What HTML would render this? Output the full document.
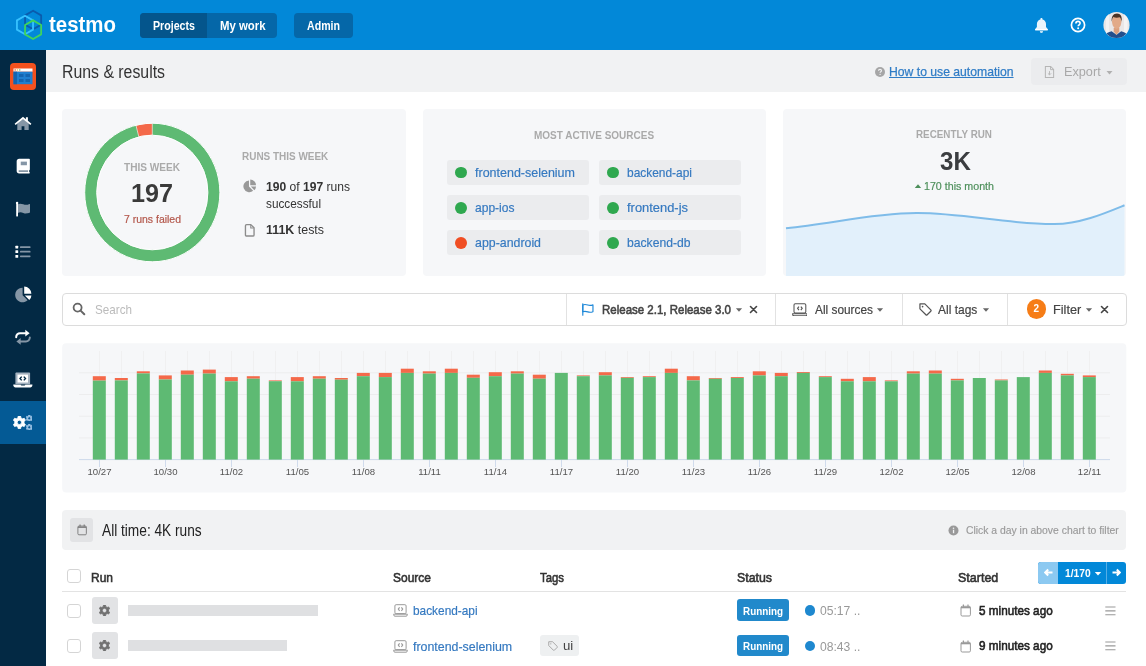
<!DOCTYPE html>
<html lang="en">
<head>
<meta charset="utf-8">
<title>Runs &amp; results - Testmo</title>
<style>
html,body{margin:0;padding:0}
body{width:1146px;height:666px;overflow:hidden;position:relative;background:#fff;font-family:"Liberation Sans",sans-serif;color:#333}
.b,.t,svg.i{position:absolute}
.b{box-sizing:border-box}
.t{white-space:pre;display:block;transform-origin:0 50%}
a.t{text-decoration:none}
h1.t{font-weight:400;margin:0}
b{font-weight:700}
header,nav,main{display:block;will-change:transform}
</style>
</head>
<body>
<header>
<div class="b" style="left:0px;top:0px;width:1146px;height:50px;background:#0288d8;"></div>
<svg class="i" style="left:10px;top:5px;" width="40" height="40" viewBox="0 0 40 40"><g fill="none" stroke-width="1.8" stroke-linejoin="round"><polygon points="23.10,5.70 31.15,10.35 31.15,19.65 23.10,24.30 15.05,19.65 15.05,10.35" stroke="#0a5cad"/><polygon points="15.00,10.70 23.05,15.35 23.05,24.65 15.00,29.30 6.95,24.65 6.95,15.35" stroke="#37c2ff"/><polygon points="23.10,15.40 31.15,20.05 31.15,29.35 23.10,34.00 15.05,29.35 15.05,20.05" stroke="#3fd45c"/></g></svg>
<span class="t" style="left:49.0px;top:11.5px;font-size:22px;line-height:26px;color:#fff;font-weight:700;transform:scaleX(0.929);">testmo</span>
<div class="b" style="left:140px;top:12.5px;width:137.3px;height:25px;background:#0567a8;border-radius:4px;overflow:hidden"><div class="b" style="left:0;top:0;width:67px;height:25px;background:#04558c"></div></div>
<span class="t" style="left:152.7px;top:18.6px;font-size:12px;line-height:14px;color:#fff;font-weight:700;transform:scaleX(0.887);">Projects</span>
<span class="t" style="left:219.6px;top:18.6px;font-size:12px;line-height:14px;color:#fff;font-weight:700;transform:scaleX(0.948);">My work</span>
<div class="b" style="left:294px;top:12.5px;width:58.5px;height:25px;background:#0567a8;border-radius:4px"></div>
<span class="t" style="left:306.6px;top:18.6px;font-size:12px;line-height:14px;color:#fff;font-weight:700;transform:scaleX(0.884);">Admin</span>
<svg class="i" style="left:1033px;top:16px;" width="17" height="18" viewBox="0 0 17 18"><path d="M8.400 2c-.6 0-1 .4-1 1v.4C5.200 3.900 3.900 5.800 3.900 8v3l-1.700 2.100v1.100h12.500v-1.100L13 11V8c0-2.200-1.300-4.100-3.500-4.600V3c0-.6-.5-1-1.100-1z" fill="#e9f4fc"/><path d="M2.200 13h12.500v1.300H2.200z" fill="#fff"/><path d="M6.900 15.200c0 .9.700 1.600 1.500 1.600s1.600-.7 1.600-1.600z" fill="#fff"/></svg>
<svg class="i" style="left:1068.6px;top:16px;" width="18" height="18" viewBox="0 0 18 18"><circle cx="9" cy="9" r="6.600" fill="none" stroke="#fff" stroke-width="1.700"/><path d="M6.900 7.400c0-1.200.9-2 2.100-2s2.100.8 2.100 1.900c0 1.500-1.900 1.600-1.900 3" fill="none" stroke="#fff" stroke-width="1.600"/><circle cx="9.150" cy="12.300" r="1" fill="#fff"/></svg>
<svg class="i" style="left:1103px;top:11px;" width="28" height="28" viewBox="0 0 28 28"><defs><clipPath id="av"><circle cx="13.500" cy="14" r="13.100"/></clipPath></defs><g clip-path="url(#av)"><rect width="28" height="28" fill="#e9e7e7"/><rect x="3" y="0" width="3" height="28" fill="#f3f2f2"/><rect x="21" y="0" width="3.500" height="28" fill="#f4f3f3"/><path d="M1 28c.3-4.500 3-6.600 7.600-7.700l4.900 3.500 4.700-3.500c4.300 1.100 7 3.200 7.300 7.700z" fill="#234f8c"/><path d="M10.700 17h5.600v3.600l-2.800 3.400-2.800-3.400z" fill="#dba07e"/><path d="M9 10.500c0-3.800 1.900-5.700 4.700-5.700s4.700 1.900 4.700 5.700c0 1.700-.5 3.600-1.400 5.100-.8 1.300-2 2.300-3.300 2.300s-2.500-1-3.300-2.300c-.9-1.500-1.400-3.400-1.400-5.100z" fill="#e2aa88"/><path d="M8.800 10.800c-.8-4.800 1.500-8.200 5.200-8.200 3.500 0 5.400 2.900 4.600 8.200-.4-2.500-1.200-3.900-2-4.500-2 .7-4.600.6-6.200-.3-.8.900-1.400 2.500-1.600 4.800z" fill="#4a3426"/></g></svg>
</header>
<nav>
<div class="b" style="left:0px;top:50px;width:46px;height:616px;background:#032944;"></div>
<div class="b" style="left:0px;top:401px;width:46px;height:43px;background:#045a95;"></div>
<div class="b" style="left:10px;top:62.5px;width:26px;height:27px;background:#f4511e;border-radius:4px"></div>
<svg class="i" style="left:13px;top:68px;" width="20" height="17" viewBox="0 0 20 17"><rect x=".5" y=".5" width="19" height="3.200" fill="#fff"/><rect x=".5" y="3.700" width="19" height="12.500" fill="#1f7fd0"/><rect x=".5" y="3.700" width="3.500" height="12.500" fill="#1565b0"/><rect x="6" y="6" width="4.500" height="3" fill="#1565b0"/><rect x="12.500" y="6" width="4.500" height="3" fill="#1565b0"/><rect x="6" y="11" width="4.500" height="3" fill="#1565b0"/><rect x="12.500" y="11" width="4.500" height="3" fill="#1565b0"/><rect x="1.500" y="1.300" width="1.300" height="1.300" fill="#f4511e"/><rect x="3.800" y="1.300" width="1.300" height="1.300" fill="#f5c242"/><rect x="6.100" y="1.300" width="1.300" height="1.300" fill="#6cc070"/></svg>
<svg class="i" style="left:14px;top:116px;" width="18" height="15" viewBox="0 0 18 15"><path d="M3.300 7.600V14h4.300v-3.800h2.800V14h4.300V7.600L9 2.900z" fill="#8596a6"/><path d="M.6 7.700L9 .8l2.900 2.400V1.300h2v3.500l3.500 2.900-1 1.200L9 3.200 1.600 8.900z" fill="#fff"/></svg>
<svg class="i" style="left:15.6px;top:158.2px;" width="15.2" height="15.8" viewBox="0 0 16 16"><path d="M3.300.5h10.500c.5 0 .8.300.8.800v10.500c0 .4-.3.700-.7.800v1.700c.4.100.7.400.7.800s-.3.800-.8.800H3.300C1.800 15.900.7 14.800.7 13.300V3.100C.7 1.600 1.800.5 3.300.5z" fill="#fff"/><rect x="5" y="3.500" width="6.500" height="3.800" fill="#8596a6"/><path d="M3.400 12.700h9.300v1.600H3.400c-.5 0-.8-.3-.8-.8s.3-.8.800-.8z" fill="#8596a6"/></svg>
<svg class="i" style="left:15px;top:201px;" width="17" height="17" viewBox="0 0 17 17"><path d="M2.600 3.200c2.200-.9 3.800-.6 5.700.1 1.900.7 3.500.8 6.700-.300v8.600c-3.200 1.200-4.800 1-6.700.3-1.900-.7-3.500-.9-5.700 0z" fill="#8596a6"/><rect x="1.200" y="1.200" width="1.800" height="14.400" rx=".9" fill="#fff"/><circle cx="2.100" cy="1.900" r="1.200" fill="#fff"/></svg>
<svg class="i" style="left:15px;top:245px;" width="17" height="14" viewBox="0 0 17 14"><g fill="#fff"><rect x=".4" y=".7" width="2.800" height="2.800" rx=".5"/><rect x=".4" y="5.300" width="2.800" height="2.800" rx=".5"/><rect x=".4" y="9.900" width="2.800" height="2.800" rx=".5"/></g><g fill="#8596a6"><rect x="5" y="1.200" width="10.500" height="1.800" rx=".6"/><rect x="5" y="5.800" width="10.500" height="1.800" rx=".6"/><rect x="5" y="10.400" width="10.500" height="1.800" rx=".6"/></g></svg>
<svg class="i" style="left:15px;top:286px;" width="17" height="17" viewBox="0 0 17 17"><path d="M7.600 1.700v7.500l5 5A7.300 7.300 0 1 1 7.600 1.700z" fill="#8596a6"/><path d="M9.200.6a7.200 7.200 0 0 1 7.200 7.200H9.200zM9.800 9.400h6.600a7.300 7.300 0 0 1-2.100 4.700z" fill="#fff"/></svg>
<svg class="i" style="left:14px;top:329px;" width="18" height="17" viewBox="0 0 18 17"><g fill="none" stroke-width="2" stroke-linecap="round"><path d="M2.200 8.200V8c0-2.100 1.700-3.800 3.800-3.800h6" stroke="#fff"/><path d="M15.800 8.400v.2c0 2.100-1.700 3.800-3.800 3.800H6" stroke="#8596a6"/></g><path d="M11.300 .8l4.300 3.400-4.300 3.400z" fill="#fff"/><path d="M6.700 9l-4.300 3.400 4.300 3.400z" fill="#8596a6"/></svg>
<svg class="i" style="left:13px;top:371px;" width="20" height="17" viewBox="0 0 20 17"><path d="M2.400 2.600c0-.6.500-1.100 1.100-1.100h12.500c.6 0 1.100.5 1.100 1.100v10.500H2.400z" fill="#a3b1bf"/><rect x="4.500" y="3.600" width="10.500" height="7.900" fill="#fff"/><path d="M8.700 5.600L7 7.500l1.700 1.900M10.800 5.600l1.700 1.900-1.700 1.900" fill="none" stroke="#032944" stroke-width="1.400"/><path d="M.3 13.400h19.100v.9c0 1.200-1 2.200-2.200 2.200H2.500c-1.200 0-2.200-1-2.200-2.200z" fill="#fff"/><path d="M7.700 13.400h4.600c0 .7-.5 1.100-1.100 1.100H8.800c-.6 0-1.100-.4-1.100-1.100z" fill="#032944"/></svg>
</nav>
<nav>
<svg class="i" style="left:13.1px;top:416.1px;" width="12.8" height="12.8" viewBox="0 0 12.8 12.8"><path fill-rule="evenodd" d="M4.89 1.91L5.20 0.11L7.60 0.11L7.91 1.91L9.53 2.85L11.24 2.22L12.44 4.30L11.04 5.46L11.04 7.34L12.44 8.50L11.24 10.58L9.53 9.95L7.91 10.89L7.60 12.69L5.20 12.69L4.89 10.89L3.27 9.95L1.56 10.58L0.36 8.50L1.76 7.34L1.76 5.46L0.36 4.30L1.56 2.22L3.27 2.85Z M8.58 6.4A2.18 2.18 0 1 0 4.22 6.4A2.18 2.18 0 1 0 8.58 6.4Z" fill="#fff" stroke="#fff" stroke-width=".8" stroke-linejoin="round"/></svg>
<svg class="i" style="left:25.7px;top:414.9px;" width="6.6" height="6.6" viewBox="0 0 6.6 6.6"><path fill-rule="evenodd" d="M2.52 0.99L2.68 0.06L3.92 0.06L4.08 0.99L4.91 1.47L5.80 1.14L6.42 2.21L5.69 2.82L5.69 3.78L6.42 4.39L5.80 5.46L4.91 5.13L4.08 5.61L3.92 6.54L2.68 6.54L2.52 5.61L1.69 5.13L0.80 5.46L0.18 4.39L0.91 3.78L0.91 2.82L0.18 2.21L0.80 1.14L1.69 1.47Z M4.82 3.3A1.52 1.52 0 1 0 1.78 3.3A1.52 1.52 0 1 0 4.82 3.3Z" fill="#9cc3e4" stroke="#9cc3e4" stroke-width=".8" stroke-linejoin="round"/></svg>
<svg class="i" style="left:25.7px;top:423.7px;" width="6.6" height="6.6" viewBox="0 0 6.6 6.6"><path fill-rule="evenodd" d="M2.52 0.99L2.68 0.06L3.92 0.06L4.08 0.99L4.91 1.47L5.80 1.14L6.42 2.21L5.69 2.82L5.69 3.78L6.42 4.39L5.80 5.46L4.91 5.13L4.08 5.61L3.92 6.54L2.68 6.54L2.52 5.61L1.69 5.13L0.80 5.46L0.18 4.39L0.91 3.78L0.91 2.82L0.18 2.21L0.80 1.14L1.69 1.47Z M4.82 3.3A1.52 1.52 0 1 0 1.78 3.3A1.52 1.52 0 1 0 4.82 3.3Z" fill="#9cc3e4" stroke="#9cc3e4" stroke-width=".8" stroke-linejoin="round"/></svg>
</nav>
<main>
<div class="b" style="left:46px;top:50px;width:1100px;height:42px;background:#f1f2f3;"></div>
<h1 class="t" style="left:62.0px;top:60.8px;font-size:18px;line-height:22px;color:#333;transform:scaleX(0.880);margin:0;">Runs &amp; results</h1>
<svg class="i" style="left:874px;top:66px;" width="12" height="12" viewBox="0 0 12 12"><circle cx="6" cy="6" r="5" fill="#a6a6a6"/><path d="M4.500 4.800c0-.9.700-1.400 1.500-1.400s1.500.5 1.500 1.300c0 1-1.400 1.100-1.400 2.100" fill="none" stroke="#f1f2f3" stroke-width="1.100"/><circle cx="6.100" cy="8.400" r=".65" fill="#f1f2f3"/></svg>
<a class="t" style="left:889.0px;top:64.0px;font-size:13.5px;line-height:16px;color:#2f7cc6;transform:scaleX(0.902);text-decoration:underline;-webkit-text-stroke:0.25px #2f7cc6;">How to use automation</a>
<div class="b" style="left:1030.5px;top:58px;width:96px;height:26.5px;background:#ebecee;border-radius:4px"></div>
<svg class="i" style="left:1043.5px;top:64.5px;" width="11" height="14" viewBox="0 0 12 15"><path d="M1.500 1.500h5.800l3.200 3.200v8.800h-9z" fill="none" stroke="#b5b5b5" stroke-width="1.100"/><path d="M7.100 1.700v3.200h3.200" fill="none" stroke="#b5b5b5" stroke-width="1"/><path d="M6 6.500v4M4.300 9l1.700 1.700L7.700 9" fill="none" stroke="#b5b5b5" stroke-width="1"/></svg>
<span class="t" style="left:1063.7px;top:64.0px;font-size:13.5px;line-height:16px;color:#a8a8a8;transform:scaleX(0.940);">Export</span>
<svg class="i" style="left:1105px;top:70px;" width="9" height="6" viewBox="0 0 9 6"><path d="M1.500 1h6L4.500 4.500z" fill="#b0b0b0"/></svg>
<div class="b" style="left:62px;top:109px;width:343.5px;height:167px;background:#f6f7f9;border-radius:4px"></div>
<div class="b" style="left:423px;top:109px;width:343px;height:167px;background:#f6f7f9;border-radius:4px"></div>
<div class="b" style="left:782.5px;top:109px;width:343.8px;height:167px;background:#f6f7f9;border-radius:4px;overflow:hidden"><svg width="344" height="167" viewBox="782.5 109 344 167" style="position:absolute;left:0;top:0"><path d="M785.500 228.200C830 224 870 213.500 916 213.100C960 212.800 1010 224.500 1054 224.100C1080 223.800 1105 213 1124 205.200V276H785.500z" fill="#e2f0fb"/><path d="M785.500 228.200C830 224 870 213.500 916 213.100C960 212.800 1010 224.500 1054 224.100C1080 223.800 1105 213 1124 205.200" fill="none" stroke="#7fbce9" stroke-width="2"/></svg></div>
<svg class="i" style="left:0px;top:0px;pointer-events:none;" width="1146" height="666" viewBox="0 0 1146 666"><ellipse cx="152.3" cy="192.5" rx="61.599999999999994" ry="63.3" fill="none" stroke="#5eba73" stroke-width="12"/><path d="M135.95 125.26A67.6 69.3 0 0 1 152.30 123.20L152.30 135.20A55.599999999999994 57.3 0 0 0 138.85 136.90Z" fill="#f4694a" stroke="#fff" stroke-width=".6"/><ellipse cx="152.3" cy="192.5" rx="67.6" ry="69.3" fill="none" stroke="#fff" stroke-width="1"/><ellipse cx="152.3" cy="192.5" rx="55.599999999999994" ry="57.3" fill="none" stroke="#fff" stroke-width="1"/></svg>
<span class="t" style="left:124.3px;top:160.8px;font-size:11px;line-height:13px;color:#aaa;font-weight:700;transform:scaleX(0.916);">THIS WEEK</span>
<span class="t" style="left:131.3px;top:178.4px;font-size:25px;line-height:30px;color:#3a3a3a;font-weight:700;transform:scaleX(1.007);">197</span>
<span class="t" style="left:123.8px;top:212.7px;font-size:11px;line-height:13px;color:#b3574b;transform:scaleX(0.951);-webkit-text-stroke:0.2px #b3574b;">7 runs failed</span>
<span class="t" style="left:242.3px;top:149.5px;font-size:11px;line-height:13px;color:#aaa;font-weight:700;transform:scaleX(0.905);">RUNS THIS WEEK</span>
<svg class="i" style="left:243.4px;top:179.35px;" width="13.6" height="13.6" viewBox="0 0 15 15"><path d="M6.600 1.600v6.800l4.600 4.600A6.500 6.500 0 1 1 6.600 1.600z" fill="#999"/><path d="M8 .6a6.400 6.400 0 0 1 6.400 6.400H8zM8.600 8.300h5.800a6.500 6.500 0 0 1-1.900 4.100z" fill="#999"/></svg>
<span class="t" style="left:266.0px;top:178.6px;font-size:13.5px;line-height:16px;color:#333;transform:scaleX(0.895);"><b>190</b> of <b>197</b> runs</span>
<span class="t" style="left:266.0px;top:196.2px;font-size:13.5px;line-height:16px;color:#333;transform:scaleX(0.873);">successful</span>
<svg class="i" style="left:244.3px;top:222.6px;" width="11.6" height="14.5" viewBox="0 0 12 15"><path d="M2.700 1.700h4.400l3.300 3.300v7.300c0 .7-.5 1.200-1.200 1.200H2.700c-.7 0-1.200-.5-1.200-1.200V2.900c0-.7.500-1.200 1.200-1.200z" fill="none" stroke="#8c8c8c" stroke-width="1.400" stroke-linejoin="round"/><path d="M7 2v3.100h3.100" fill="none" stroke="#8c8c8c" stroke-width="1.100"/></svg>
<span class="t" style="left:266.0px;top:222.0px;font-size:13.5px;line-height:16px;color:#333;transform:scaleX(0.920);"><b>111K</b> tests</span>
<span class="t" style="left:534.4px;top:128.9px;font-size:11px;line-height:13px;color:#aaa;font-weight:700;transform:scaleX(0.908);">MOST ACTIVE SOURCES</span>
<div class="b" style="left:447px;top:159.7px;width:142px;height:25px;background:#ebecee;border-radius:3px"></div>
<div class="b" style="left:455.2px;top:166.5px;width:11.800px;height:11.800px;border-radius:50%;background:#2fa84f"></div>
<a class="t" style="left:474.7px;top:164.7px;font-size:13.5px;line-height:16px;color:#3579c0;transform:scaleX(0.925);-webkit-text-stroke:0.2px #3579c0;">frontend-selenium</a>
<div class="b" style="left:599px;top:159.7px;width:142px;height:25px;background:#ebecee;border-radius:3px"></div>
<div class="b" style="left:607.2px;top:166.5px;width:11.800px;height:11.800px;border-radius:50%;background:#2fa84f"></div>
<a class="t" style="left:626.7px;top:164.7px;font-size:13.5px;line-height:16px;color:#3579c0;transform:scaleX(0.884);-webkit-text-stroke:0.2px #3579c0;">backend-api</a>
<div class="b" style="left:447px;top:195.0px;width:142px;height:25px;background:#ebecee;border-radius:3px"></div>
<div class="b" style="left:455.2px;top:201.8px;width:11.800px;height:11.800px;border-radius:50%;background:#2fa84f"></div>
<a class="t" style="left:474.7px;top:200.0px;font-size:13.5px;line-height:16px;color:#3579c0;transform:scaleX(0.892);-webkit-text-stroke:0.2px #3579c0;">app-ios</a>
<div class="b" style="left:599px;top:195.0px;width:142px;height:25px;background:#ebecee;border-radius:3px"></div>
<div class="b" style="left:607.2px;top:201.8px;width:11.800px;height:11.800px;border-radius:50%;background:#2fa84f"></div>
<a class="t" style="left:626.7px;top:200.0px;font-size:13.5px;line-height:16px;color:#3579c0;transform:scaleX(0.956);-webkit-text-stroke:0.2px #3579c0;">frontend-js</a>
<div class="b" style="left:447px;top:230.3px;width:142px;height:25px;background:#ebecee;border-radius:3px"></div>
<div class="b" style="left:455.2px;top:237.1px;width:11.800px;height:11.800px;border-radius:50%;background:#f04e23"></div>
<a class="t" style="left:474.7px;top:235.3px;font-size:13.5px;line-height:16px;color:#3579c0;transform:scaleX(0.916);-webkit-text-stroke:0.2px #3579c0;">app-android</a>
<div class="b" style="left:599px;top:230.3px;width:142px;height:25px;background:#ebecee;border-radius:3px"></div>
<div class="b" style="left:607.2px;top:237.1px;width:11.800px;height:11.800px;border-radius:50%;background:#2fa84f"></div>
<a class="t" style="left:626.7px;top:235.3px;font-size:13.5px;line-height:16px;color:#3579c0;transform:scaleX(0.900);-webkit-text-stroke:0.2px #3579c0;">backend-db</a>
<span class="t" style="left:916.4px;top:128.3px;font-size:11px;line-height:13px;color:#aaa;font-weight:700;transform:scaleX(0.894);">RECENTLY RUN</span>
<span class="t" style="left:939.6px;top:145.6px;font-size:25px;line-height:30px;color:#3b3d40;font-weight:700;transform:scaleX(0.963);">3K</span>
<svg class="i" style="left:914px;top:183px;" width="8" height="6" viewBox="0 0 8 6"><path d="M.8 5L4 1.300 7.200 5z" fill="#4d8f5b"/></svg>
<span class="t" style="left:924.0px;top:180.3px;font-size:11px;line-height:13px;color:#4d8f5b;transform:scaleX(0.970);-webkit-text-stroke:0.2px #4d8f5b;">170 this month</span>
<div class="b" style="left:62px;top:293px;width:1064.6px;height:33px;background:#fff;border:1px solid #dcdcdc;border-radius:4px"></div>
<div class="b" style="left:566.0px;top:294px;width:1px;height:31px;background:#e2e2e2;"></div>
<div class="b" style="left:775.0px;top:294px;width:1px;height:31px;background:#e2e2e2;"></div>
<div class="b" style="left:902.0px;top:294px;width:1px;height:31px;background:#e2e2e2;"></div>
<div class="b" style="left:1007.0px;top:294px;width:1px;height:31px;background:#e2e2e2;"></div>
<svg class="i" style="left:72px;top:302px;" width="14" height="14" viewBox="0 0 14 14"><circle cx="5.600" cy="5.600" r="4" fill="none" stroke="#666" stroke-width="1.800"/><path d="M8.600 8.600l3.700 3.700" stroke="#666" stroke-width="2" stroke-linecap="round"/></svg>
<span class="t" style="left:94.6px;top:301.5px;font-size:13.5px;line-height:16px;color:#bbb;transform:scaleX(0.865);">Search</span>
<svg class="i" style="left:581.1px;top:301.9px;" width="14.4" height="14.4" viewBox="0 0 16 16"><path d="M2 2v12.700" stroke="#1e88d8" stroke-width="1.300" stroke-linecap="round"/><path d="M2 3.300c2.300-1 3.800-.5 5.600.1 1.800.6 3.200.7 5.700-.2v7.600c-2.500.9-3.900.8-5.700.2-1.800-.6-3.300-1.100-5.600-.1z" fill="none" stroke="#1e88d8" stroke-width="1.300" stroke-linejoin="round"/></svg>
<span class="t" style="left:602.0px;top:301.5px;font-size:13.5px;line-height:16px;color:#444;transform:scaleX(0.851);-webkit-text-stroke:0.6px #444;">Release 2.1, Release 3.0</span>
<svg class="i" style="left:734.5px;top:307.2px;" width="8" height="6" viewBox="0 0 8 6"><path d="M.9 1.200h6.200L4 4.700z" fill="#666"/></svg>
<svg class="i" style="left:749px;top:305px;" width="9" height="9" viewBox="0 0 9 9"><path d="M1.500 1.500l6 6M7.500 1.500l-6 6" stroke="#444" stroke-width="1.600" stroke-linecap="round"/></svg>
<svg class="i" style="left:791.7px;top:302.5px;" width="15.8" height="13.7" viewBox="0 0 15 13"><rect x="1.900" y=".7" width="11.200" height="8.900" rx="1.200" fill="none" stroke="#555" stroke-width="1"/><path d="M6.600 3.400L5.300 5.100l1.300 1.700M8.400 3.400l1.300 1.700-1.300 1.700" fill="none" stroke="#555" stroke-width="1.100"/><path d="M.6 10.200h13.800v.6c0 .8-.6 1.400-1.400 1.400H2c-.8 0-1.400-.6-1.400-1.400z" fill="none" stroke="#555" stroke-width="1"/></svg>
<span class="t" style="left:815.0px;top:301.7px;font-size:13.5px;line-height:16px;color:#444;transform:scaleX(0.878);-webkit-text-stroke:0.2px #444;">All sources</span>
<svg class="i" style="left:876.4px;top:307.2px;" width="8" height="6" viewBox="0 0 8 6"><path d="M.9 1.200h6.200L4 4.700z" fill="#666"/></svg>
<svg class="i" style="left:918.6px;top:303px;" width="13.2" height="13.2" viewBox="0 0 14 14"><path d="M1 1h5.200l6.300 6.300c.4.400.4 1 0 1.400l-3.800 3.800c-.4.400-1 .4-1.400 0L1 6.200z" fill="none" stroke="#555" stroke-width="1.300" stroke-linejoin="round"/><circle cx="3.800" cy="3.800" r=".9" fill="#555"/></svg>
<span class="t" style="left:938.4px;top:301.7px;font-size:13.5px;line-height:16px;color:#444;transform:scaleX(0.888);-webkit-text-stroke:0.2px #444;">All tags</span>
<svg class="i" style="left:982.2px;top:307.2px;" width="8" height="6" viewBox="0 0 8 6"><path d="M.9 1.200h6.200L4 4.700z" fill="#666"/></svg>
<div class="b" style="left:1026.500px;top:299.100px;width:19.600px;height:19.600px;border-radius:50%;background:#f67d17"></div>
<span class="t" style="left:1033.5px;top:303.2px;font-size:10px;line-height:12px;color:#fff;font-weight:700;">2</span>
<span class="t" style="left:1052.8px;top:302.0px;font-size:13.5px;line-height:16px;color:#444;transform:scaleX(0.940);-webkit-text-stroke:0.2px #444;">Filter</span>
<svg class="i" style="left:1085.3px;top:307.2px;" width="8" height="6" viewBox="0 0 8 6"><path d="M.9 1.200h6.200L4 4.700z" fill="#666"/></svg>
<svg class="i" style="left:1099.5px;top:305px;" width="9" height="9" viewBox="0 0 9 9"><path d="M1.500 1.500l6 6M7.500 1.500l-6 6" stroke="#444" stroke-width="1.600" stroke-linecap="round"/></svg>
<svg class="i" style="left:0px;top:0px;pointer-events:none;font-family:&quot;Liberation Sans&quot;,sans-serif;" width="1146" height="666" viewBox="0 0 1146 666"><rect x="62.200" y="343.200" width="1064.100" height="149.400" rx="4" fill="#f6f7f9"/><path d="M99.5 351V459.6" stroke="#f0f0f1" stroke-width="1"/><path d="M121.5 351V459.6" stroke="#f0f0f1" stroke-width="1"/><path d="M143.5 351V459.6" stroke="#f0f0f1" stroke-width="1"/><path d="M165.5 351V459.6" stroke="#f0f0f1" stroke-width="1"/><path d="M187.5 351V459.6" stroke="#f0f0f1" stroke-width="1"/><path d="M209.5 351V459.6" stroke="#f0f0f1" stroke-width="1"/><path d="M231.5 351V459.6" stroke="#f0f0f1" stroke-width="1"/><path d="M253.5 351V459.6" stroke="#f0f0f1" stroke-width="1"/><path d="M275.5 351V459.6" stroke="#f0f0f1" stroke-width="1"/><path d="M297.5 351V459.6" stroke="#f0f0f1" stroke-width="1"/><path d="M319.5 351V459.6" stroke="#f0f0f1" stroke-width="1"/><path d="M341.5 351V459.6" stroke="#f0f0f1" stroke-width="1"/><path d="M363.5 351V459.6" stroke="#f0f0f1" stroke-width="1"/><path d="M385.5 351V459.6" stroke="#f0f0f1" stroke-width="1"/><path d="M407.5 351V459.6" stroke="#f0f0f1" stroke-width="1"/><path d="M429.5 351V459.6" stroke="#f0f0f1" stroke-width="1"/><path d="M451.5 351V459.6" stroke="#f0f0f1" stroke-width="1"/><path d="M473.5 351V459.6" stroke="#f0f0f1" stroke-width="1"/><path d="M495.5 351V459.6" stroke="#f0f0f1" stroke-width="1"/><path d="M517.5 351V459.6" stroke="#f0f0f1" stroke-width="1"/><path d="M539.5 351V459.6" stroke="#f0f0f1" stroke-width="1"/><path d="M561.5 351V459.6" stroke="#f0f0f1" stroke-width="1"/><path d="M583.5 351V459.6" stroke="#f0f0f1" stroke-width="1"/><path d="M605.5 351V459.6" stroke="#f0f0f1" stroke-width="1"/><path d="M627.5 351V459.6" stroke="#f0f0f1" stroke-width="1"/><path d="M649.5 351V459.6" stroke="#f0f0f1" stroke-width="1"/><path d="M671.5 351V459.6" stroke="#f0f0f1" stroke-width="1"/><path d="M693.5 351V459.6" stroke="#f0f0f1" stroke-width="1"/><path d="M715.5 351V459.6" stroke="#f0f0f1" stroke-width="1"/><path d="M737.5 351V459.6" stroke="#f0f0f1" stroke-width="1"/><path d="M759.5 351V459.6" stroke="#f0f0f1" stroke-width="1"/><path d="M781.5 351V459.6" stroke="#f0f0f1" stroke-width="1"/><path d="M803.5 351V459.6" stroke="#f0f0f1" stroke-width="1"/><path d="M825.5 351V459.6" stroke="#f0f0f1" stroke-width="1"/><path d="M847.5 351V459.6" stroke="#f0f0f1" stroke-width="1"/><path d="M869.5 351V459.6" stroke="#f0f0f1" stroke-width="1"/><path d="M891.5 351V459.6" stroke="#f0f0f1" stroke-width="1"/><path d="M913.5 351V459.6" stroke="#f0f0f1" stroke-width="1"/><path d="M935.5 351V459.6" stroke="#f0f0f1" stroke-width="1"/><path d="M957.5 351V459.6" stroke="#f0f0f1" stroke-width="1"/><path d="M979.5 351V459.6" stroke="#f0f0f1" stroke-width="1"/><path d="M1001.5 351V459.6" stroke="#f0f0f1" stroke-width="1"/><path d="M1023.5 351V459.6" stroke="#f0f0f1" stroke-width="1"/><path d="M1045.5 351V459.6" stroke="#f0f0f1" stroke-width="1"/><path d="M1067.5 351V459.6" stroke="#f0f0f1" stroke-width="1"/><path d="M1089.5 351V459.6" stroke="#f0f0f1" stroke-width="1"/><path d="M79 372.8H1110" stroke="#ededee" stroke-width="1"/><path d="M79 394.5H1110" stroke="#ededee" stroke-width="1"/><path d="M79 416.2H1110" stroke="#ededee" stroke-width="1"/><path d="M79 437.9H1110" stroke="#ededee" stroke-width="1"/><path d="M79 459.6H1110" stroke="#cdd9eb" stroke-width="1"/><path d="M99.5 459.6V467" stroke="#d0dbec" stroke-width="1"/><path d="M165.5 459.6V467" stroke="#d0dbec" stroke-width="1"/><path d="M231.5 459.6V467" stroke="#d0dbec" stroke-width="1"/><path d="M297.5 459.6V467" stroke="#d0dbec" stroke-width="1"/><path d="M363.5 459.6V467" stroke="#d0dbec" stroke-width="1"/><path d="M429.5 459.6V467" stroke="#d0dbec" stroke-width="1"/><path d="M495.5 459.6V467" stroke="#d0dbec" stroke-width="1"/><path d="M561.5 459.6V467" stroke="#d0dbec" stroke-width="1"/><path d="M627.5 459.6V467" stroke="#d0dbec" stroke-width="1"/><path d="M693.5 459.6V467" stroke="#d0dbec" stroke-width="1"/><path d="M759.5 459.6V467" stroke="#d0dbec" stroke-width="1"/><path d="M825.5 459.6V467" stroke="#d0dbec" stroke-width="1"/><path d="M891.5 459.6V467" stroke="#d0dbec" stroke-width="1"/><path d="M957.5 459.6V467" stroke="#d0dbec" stroke-width="1"/><path d="M1023.5 459.6V467" stroke="#d0dbec" stroke-width="1"/><path d="M1089.5 459.6V467" stroke="#d0dbec" stroke-width="1"/><rect x="92.8" y="376.2" width="13" height="4.4" fill="#f4694a"/><rect x="92.8" y="380.6" width="13" height="79.0" fill="#5eba73"/><rect x="114.8" y="378.0" width="13" height="2.4" fill="#f4694a"/><rect x="114.8" y="380.4" width="13" height="79.2" fill="#5eba73"/><rect x="136.8" y="371.3" width="13" height="2.1" fill="#f4694a"/><rect x="136.8" y="373.4" width="13" height="86.2" fill="#5eba73"/><rect x="158.8" y="375.4" width="13" height="4.1" fill="#f4694a"/><rect x="158.8" y="379.5" width="13" height="80.1" fill="#5eba73"/><rect x="180.8" y="370.5" width="13" height="4.2" fill="#f4694a"/><rect x="180.8" y="374.7" width="13" height="84.9" fill="#5eba73"/><rect x="202.8" y="369.6" width="13" height="4.0" fill="#f4694a"/><rect x="202.8" y="373.6" width="13" height="86.0" fill="#5eba73"/><rect x="224.8" y="377.1" width="13" height="4.2" fill="#f4694a"/><rect x="224.8" y="381.3" width="13" height="78.3" fill="#5eba73"/><rect x="246.8" y="376.2" width="13" height="2.5" fill="#f4694a"/><rect x="246.8" y="378.7" width="13" height="80.9" fill="#5eba73"/><rect x="268.8" y="380.4" width="13" height="0.8" fill="#f4694a"/><rect x="268.8" y="381.2" width="13" height="78.4" fill="#5eba73"/><rect x="290.8" y="377.1" width="13" height="4.2" fill="#f4694a"/><rect x="290.8" y="381.3" width="13" height="78.3" fill="#5eba73"/><rect x="312.8" y="376.2" width="13" height="2.5" fill="#f4694a"/><rect x="312.8" y="378.7" width="13" height="80.9" fill="#5eba73"/><rect x="334.8" y="378.0" width="13" height="1.7" fill="#f4694a"/><rect x="334.8" y="379.7" width="13" height="79.9" fill="#5eba73"/><rect x="356.8" y="372.9" width="13" height="3.3" fill="#f4694a"/><rect x="356.8" y="376.2" width="13" height="83.4" fill="#5eba73"/><rect x="378.8" y="372.9" width="13" height="4.2" fill="#f4694a"/><rect x="378.8" y="377.1" width="13" height="82.5" fill="#5eba73"/><rect x="400.8" y="368.7" width="13" height="4.2" fill="#f4694a"/><rect x="400.8" y="372.9" width="13" height="86.7" fill="#5eba73"/><rect x="422.8" y="371.3" width="13" height="2.3" fill="#f4694a"/><rect x="422.8" y="373.6" width="13" height="86.0" fill="#5eba73"/><rect x="444.8" y="368.7" width="13" height="4.2" fill="#f4694a"/><rect x="444.8" y="372.9" width="13" height="86.7" fill="#5eba73"/><rect x="466.8" y="374.7" width="13" height="3.1" fill="#f4694a"/><rect x="466.8" y="377.8" width="13" height="81.8" fill="#5eba73"/><rect x="488.8" y="372.2" width="13" height="4.0" fill="#f4694a"/><rect x="488.8" y="376.2" width="13" height="83.4" fill="#5eba73"/><rect x="510.8" y="371.3" width="13" height="2.3" fill="#f4694a"/><rect x="510.8" y="373.6" width="13" height="86.0" fill="#5eba73"/><rect x="532.8" y="374.7" width="13" height="4.0" fill="#f4694a"/><rect x="532.8" y="378.7" width="13" height="80.9" fill="#5eba73"/><rect x="554.8" y="372.9" width="13" height="86.7" fill="#5eba73"/><rect x="576.8" y="375.4" width="13" height="0.8" fill="#f4694a"/><rect x="576.8" y="376.2" width="13" height="83.4" fill="#5eba73"/><rect x="598.8" y="372.2" width="13" height="3.2" fill="#f4694a"/><rect x="598.8" y="375.4" width="13" height="84.2" fill="#5eba73"/><rect x="620.8" y="377.1" width="13" height="0.8" fill="#f4694a"/><rect x="620.8" y="377.9" width="13" height="81.7" fill="#5eba73"/><rect x="642.8" y="376.2" width="13" height="0.9" fill="#f4694a"/><rect x="642.8" y="377.1" width="13" height="82.5" fill="#5eba73"/><rect x="664.8" y="368.7" width="13" height="4.2" fill="#f4694a"/><rect x="664.8" y="372.9" width="13" height="86.7" fill="#5eba73"/><rect x="686.8" y="376.2" width="13" height="4.2" fill="#f4694a"/><rect x="686.8" y="380.4" width="13" height="79.2" fill="#5eba73"/><rect x="708.8" y="378.0" width="13" height="0.8" fill="#f4694a"/><rect x="708.8" y="378.8" width="13" height="80.8" fill="#5eba73"/><rect x="730.8" y="377.1" width="13" height="0.9" fill="#f4694a"/><rect x="730.8" y="378.0" width="13" height="81.6" fill="#5eba73"/><rect x="752.8" y="371.3" width="13" height="4.1" fill="#f4694a"/><rect x="752.8" y="375.4" width="13" height="84.2" fill="#5eba73"/><rect x="774.8" y="372.9" width="13" height="3.3" fill="#f4694a"/><rect x="774.8" y="376.2" width="13" height="83.4" fill="#5eba73"/><rect x="796.8" y="372.0" width="13" height="0.9" fill="#f4694a"/><rect x="796.8" y="372.9" width="13" height="86.7" fill="#5eba73"/><rect x="818.8" y="376.2" width="13" height="0.9" fill="#f4694a"/><rect x="818.8" y="377.1" width="13" height="82.5" fill="#5eba73"/><rect x="840.8" y="378.8" width="13" height="2.5" fill="#f4694a"/><rect x="840.8" y="381.3" width="13" height="78.3" fill="#5eba73"/><rect x="862.8" y="377.1" width="13" height="4.2" fill="#f4694a"/><rect x="862.8" y="381.3" width="13" height="78.3" fill="#5eba73"/><rect x="884.8" y="380.4" width="13" height="0.9" fill="#f4694a"/><rect x="884.8" y="381.3" width="13" height="78.3" fill="#5eba73"/><rect x="906.8" y="371.3" width="13" height="2.3" fill="#f4694a"/><rect x="906.8" y="373.6" width="13" height="86.0" fill="#5eba73"/><rect x="928.8" y="370.5" width="13" height="3.1" fill="#f4694a"/><rect x="928.8" y="373.6" width="13" height="86.0" fill="#5eba73"/><rect x="950.8" y="378.8" width="13" height="1.6" fill="#f4694a"/><rect x="950.8" y="380.4" width="13" height="79.2" fill="#5eba73"/><rect x="972.8" y="378.0" width="13" height="81.6" fill="#5eba73"/><rect x="994.8" y="379.5" width="13" height="0.9" fill="#f4694a"/><rect x="994.8" y="380.4" width="13" height="79.2" fill="#5eba73"/><rect x="1016.8" y="377.1" width="13" height="82.5" fill="#5eba73"/><rect x="1038.8" y="370.5" width="13" height="2.4" fill="#f4694a"/><rect x="1038.8" y="372.9" width="13" height="86.7" fill="#5eba73"/><rect x="1060.8" y="373.8" width="13" height="1.6" fill="#f4694a"/><rect x="1060.8" y="375.4" width="13" height="84.2" fill="#5eba73"/><rect x="1082.8" y="375.4" width="13" height="1.7" fill="#f4694a"/><rect x="1082.8" y="377.1" width="13" height="82.5" fill="#5eba73"/><text x="99.5" y="474.800" text-anchor="middle" font-size="9.600" fill="#555">10/27</text><text x="165.5" y="474.800" text-anchor="middle" font-size="9.600" fill="#555">10/30</text><text x="231.5" y="474.800" text-anchor="middle" font-size="9.600" fill="#555">11/02</text><text x="297.5" y="474.800" text-anchor="middle" font-size="9.600" fill="#555">11/05</text><text x="363.5" y="474.800" text-anchor="middle" font-size="9.600" fill="#555">11/08</text><text x="429.5" y="474.800" text-anchor="middle" font-size="9.600" fill="#555">11/11</text><text x="495.5" y="474.800" text-anchor="middle" font-size="9.600" fill="#555">11/14</text><text x="561.5" y="474.800" text-anchor="middle" font-size="9.600" fill="#555">11/17</text><text x="627.5" y="474.800" text-anchor="middle" font-size="9.600" fill="#555">11/20</text><text x="693.5" y="474.800" text-anchor="middle" font-size="9.600" fill="#555">11/23</text><text x="759.5" y="474.800" text-anchor="middle" font-size="9.600" fill="#555">11/26</text><text x="825.5" y="474.800" text-anchor="middle" font-size="9.600" fill="#555">11/29</text><text x="891.5" y="474.800" text-anchor="middle" font-size="9.600" fill="#555">12/02</text><text x="957.5" y="474.800" text-anchor="middle" font-size="9.600" fill="#555">12/05</text><text x="1023.5" y="474.800" text-anchor="middle" font-size="9.600" fill="#555">12/08</text><text x="1089.5" y="474.800" text-anchor="middle" font-size="9.600" fill="#555">12/11</text></svg>
<div class="b" style="left:62px;top:510px;width:1064.4px;height:40px;background:#f1f2f3;border-radius:4px"></div>
<div class="b" style="left:70px;top:518px;width:23px;height:23.5px;background:#e2e3e5;border-radius:3px"></div>
<svg class="i" style="left:76.5px;top:524.4px;" width="10.8" height="11.7" viewBox="0 0 12 13"><rect x="1" y="2.300" width="9.400" height="9.700" rx="1.200" fill="none" stroke="#777" stroke-width="1"/><path d="M3.400 .6v2.200M8 .6v2.200" stroke="#777" stroke-width="1.200"/><path d="M1 3.600h9.400" stroke="#777" stroke-width="1.400"/></svg>
<span class="t" style="left:101.8px;top:521.1px;font-size:15.7px;line-height:19px;color:#222;transform:scaleX(0.873);">All time: 4K runs</span>
<svg class="i" style="left:948px;top:524.5px;" width="11" height="11" viewBox="0 0 11 11"><circle cx="5.500" cy="5.500" r="5" fill="#999"/><rect x="4.900" y="4.700" width="1.300" height="3.500" fill="#f1f2f3"/><circle cx="5.500" cy="3.200" r=".8" fill="#f1f2f3"/></svg>
<span class="t" style="left:965.5px;top:523.8px;font-size:11px;line-height:13px;color:#999;transform:scaleX(0.943);-webkit-text-stroke:0.15px #999;">Click a day in above chart to filter</span>
<div class="b" style="left:67px;top:569.2px;width:14.2px;height:14.2px;background:#fff;border:1px solid #d5d5d5;border-radius:3px"></div>
<span class="t" style="left:91.3px;top:570.3px;font-size:13.5px;line-height:16px;color:#333;transform:scaleX(0.888);-webkit-text-stroke:0.6px #333;">Run</span>
<span class="t" style="left:393.0px;top:570.0px;font-size:13.5px;line-height:16px;color:#333;transform:scaleX(0.888);-webkit-text-stroke:0.6px #333;">Source</span>
<span class="t" style="left:540.4px;top:570.0px;font-size:13.5px;line-height:16px;color:#333;transform:scaleX(0.841);-webkit-text-stroke:0.6px #333;">Tags</span>
<span class="t" style="left:736.6px;top:570.0px;font-size:13.5px;line-height:16px;color:#333;transform:scaleX(0.914);-webkit-text-stroke:0.6px #333;">Status</span>
<span class="t" style="left:958.0px;top:569.7px;font-size:13.5px;line-height:16px;color:#333;transform:scaleX(0.926);-webkit-text-stroke:0.6px #333;">Started</span>
<div class="b" style="left:62px;top:591.3px;width:1064.4px;height:1px;background:#e3e3e3;"></div>
<div class="b" style="left:1038px;top:562px;width:88.3px;height:21.6px;background:#0288d8;border-radius:3px;overflow:hidden"><div class="b" style="left:0;top:0;width:20.200px;height:22px;background:#8cc9f1"></div><div class="b" style="left:67.700px;top:0;width:1px;height:22px;background:#55aee6"></div></div>
<svg class="i" style="left:1043.5px;top:568.3px;" width="10" height="9" viewBox="0 0 10 9"><g transform="translate(10,0) scale(-1,1)"><path d="M1.500 4.500h7M5.800 1.500l3 3-3 3" fill="none" stroke="#fff" stroke-width="2" stroke-linecap="butt" stroke-linejoin="miter"/></g></svg>
<span class="t" style="left:1065.2px;top:566.5px;font-size:11px;line-height:13px;color:#fff;font-weight:700;transform:scaleX(0.930);">1/170</span>
<svg class="i" style="left:1094px;top:571px;" width="8" height="6" viewBox="0 0 8 6"><path d="M.8 1h6.400L4 4.600z" fill="#fff"/></svg>
<svg class="i" style="left:1111px;top:568.3px;" width="10" height="9" viewBox="0 0 10 9"><path d="M1.500 4.500h7M5.800 1.500l3 3-3 3" fill="none" stroke="#fff" stroke-width="2" stroke-linecap="butt" stroke-linejoin="miter"/></svg>
<div class="b" style="left:67px;top:603.7px;width:14.2px;height:14.2px;background:#fff;border:1px solid #d5d5d5;border-radius:3px"></div>
<div class="b" style="left:91.9px;top:597.1px;width:26px;height:26.5px;background:#e2e3e5;border-radius:3px"></div>
<svg class="i" style="left:99.4px;top:605.0px;" width="11" height="11" viewBox="0 0 11 11"><path fill-rule="evenodd" d="M4.20 1.64L4.47 0.10L6.53 0.10L6.80 1.64L8.19 2.45L9.66 1.91L10.69 3.69L9.49 4.70L9.49 6.30L10.69 7.31L9.66 9.09L8.19 8.55L6.80 9.36L6.53 10.90L4.47 10.90L4.20 9.36L2.81 8.55L1.34 9.09L0.31 7.31L1.51 6.30L1.51 4.70L0.31 3.69L1.34 1.91L2.81 2.45Z M7.70 5.5A2.20 2.20 0 1 0 3.30 5.5A2.20 2.20 0 1 0 7.70 5.5Z" fill="#707070" stroke="#707070" stroke-width=".8" stroke-linejoin="round"/></svg>
<div class="b" style="left:127.5px;top:604.6px;width:190.20000000000002px;height:11.5px;background:#dfe0e2;"></div>
<svg class="i" style="left:393px;top:604.3000000000001px;" width="15" height="13" viewBox="0 0 15 13"><rect x="1.900" y=".7" width="11.200" height="8.900" rx="1.200" fill="none" stroke="#999" stroke-width="1"/><path d="M6.600 3.400L5.300 5.100l1.300 1.700M8.400 3.400l1.300 1.700-1.300 1.700" fill="none" stroke="#999" stroke-width="1.100"/><path d="M.6 10.200h13.800v.6c0 .8-.6 1.400-1.400 1.400H2c-.8 0-1.400-.6-1.400-1.400z" fill="none" stroke="#999" stroke-width="1"/></svg>
<a class="t" style="left:413.4px;top:603.4px;font-size:13.5px;line-height:16px;color:#3579c0;transform:scaleX(0.878);-webkit-text-stroke:0.2px #3579c0;">backend-api</a>
<div class="b" style="left:736.6px;top:599.4px;width:52.2px;height:21.8px;background:#2189cb;border-radius:3px"></div>
<span class="t" style="left:742.7px;top:604.9px;font-size:11px;line-height:13px;color:#fff;font-weight:700;transform:scaleX(0.897);">Running</span>
<div class="b" style="left:804.600px;top:605.3px;width:10.600px;height:10.600px;border-radius:50%;background:#1e88cf"></div>
<span class="t" style="left:820.0px;top:603.3px;font-size:13.5px;line-height:16px;color:#999;transform:scaleX(0.899);">05:17 ..</span>
<svg class="i" style="left:960px;top:604.3000000000001px;" width="12" height="13" viewBox="0 0 12 13"><rect x="1" y="2.300" width="9.400" height="9.700" rx="1.200" fill="none" stroke="#999" stroke-width="1"/><path d="M3.400 .6v2.200M8 .6v2.200" stroke="#999" stroke-width="1.200"/><path d="M1 3.600h9.400" stroke="#999" stroke-width="1.400"/></svg>
<span class="t" style="left:978.5px;top:602.9px;font-size:13.5px;line-height:16px;color:#222;transform:scaleX(0.869);-webkit-text-stroke:0.6px #222;">5 minutes ago</span>
<svg class="i" style="left:1105px;top:605.8000000000001px;" width="11" height="10" viewBox="0 0 11 10"><path d="M.3 1h10.200M.3 4.900h10.200M.3 8.800h10.200" stroke="#999" stroke-width="1.100"/></svg>
<div class="b" style="left:67px;top:639.0px;width:14.2px;height:14.2px;background:#fff;border:1px solid #d5d5d5;border-radius:3px"></div>
<div class="b" style="left:91.9px;top:632.4px;width:26px;height:26.5px;background:#e2e3e5;border-radius:3px"></div>
<svg class="i" style="left:99.4px;top:640.3px;" width="11" height="11" viewBox="0 0 11 11"><path fill-rule="evenodd" d="M4.20 1.64L4.47 0.10L6.53 0.10L6.80 1.64L8.19 2.45L9.66 1.91L10.69 3.69L9.49 4.70L9.49 6.30L10.69 7.31L9.66 9.09L8.19 8.55L6.80 9.36L6.53 10.90L4.47 10.90L4.20 9.36L2.81 8.55L1.34 9.09L0.31 7.31L1.51 6.30L1.51 4.70L0.31 3.69L1.34 1.91L2.81 2.45Z M7.70 5.5A2.20 2.20 0 1 0 3.30 5.5A2.20 2.20 0 1 0 7.70 5.5Z" fill="#707070" stroke="#707070" stroke-width=".8" stroke-linejoin="round"/></svg>
<div class="b" style="left:127.5px;top:639.9px;width:159.1px;height:11.5px;background:#dfe0e2;"></div>
<svg class="i" style="left:393px;top:639.6px;" width="15" height="13" viewBox="0 0 15 13"><rect x="1.900" y=".7" width="11.200" height="8.900" rx="1.200" fill="none" stroke="#999" stroke-width="1"/><path d="M6.600 3.400L5.300 5.100l1.300 1.700M8.400 3.400l1.300 1.700-1.300 1.700" fill="none" stroke="#999" stroke-width="1.100"/><path d="M.6 10.200h13.800v.6c0 .8-.6 1.400-1.400 1.400H2c-.8 0-1.400-.6-1.400-1.400z" fill="none" stroke="#999" stroke-width="1"/></svg>
<a class="t" style="left:413.4px;top:638.7px;font-size:13.5px;line-height:16px;color:#3579c0;transform:scaleX(0.918);-webkit-text-stroke:0.2px #3579c0;">frontend-selenium</a>
<div class="b" style="left:540.4px;top:634.6px;width:39px;height:21.5px;background:#eef0f1;border-radius:3px"></div>
<svg class="i" style="left:547.8px;top:641.1px;" width="10.3" height="10.3" viewBox="0 0 14 14"><path d="M1 1h5.200l6.300 6.300c.4.400.4 1 0 1.400l-3.800 3.800c-.4.400-1 .4-1.400 0L1 6.200z" fill="none" stroke="#a5a5a5" stroke-width="1.300" stroke-linejoin="round"/><circle cx="3.800" cy="3.800" r=".9" fill="#a5a5a5"/></svg>
<span class="t" style="left:562.6px;top:639.1px;font-size:12px;line-height:14px;color:#444;transform:scaleX(1.102);">ui</span>
<div class="b" style="left:736.6px;top:634.6999999999999px;width:52.2px;height:21.8px;background:#2189cb;border-radius:3px"></div>
<span class="t" style="left:742.7px;top:640.2px;font-size:11px;line-height:13px;color:#fff;font-weight:700;transform:scaleX(0.897);">Running</span>
<div class="b" style="left:804.600px;top:640.6px;width:10.600px;height:10.600px;border-radius:50%;background:#1e88cf"></div>
<span class="t" style="left:820.0px;top:638.6px;font-size:13.5px;line-height:16px;color:#999;transform:scaleX(0.899);">08:43 ..</span>
<svg class="i" style="left:960px;top:639.6px;" width="12" height="13" viewBox="0 0 12 13"><rect x="1" y="2.300" width="9.400" height="9.700" rx="1.200" fill="none" stroke="#999" stroke-width="1"/><path d="M3.400 .6v2.200M8 .6v2.200" stroke="#999" stroke-width="1.200"/><path d="M1 3.600h9.400" stroke="#999" stroke-width="1.400"/></svg>
<span class="t" style="left:978.5px;top:638.2px;font-size:13.5px;line-height:16px;color:#222;transform:scaleX(0.869);-webkit-text-stroke:0.6px #222;">9 minutes ago</span>
<svg class="i" style="left:1105px;top:641.1px;" width="11" height="10" viewBox="0 0 11 10"><path d="M.3 1h10.200M.3 4.900h10.200M.3 8.800h10.200" stroke="#999" stroke-width="1.100"/></svg>
</main>
</body>
</html>
